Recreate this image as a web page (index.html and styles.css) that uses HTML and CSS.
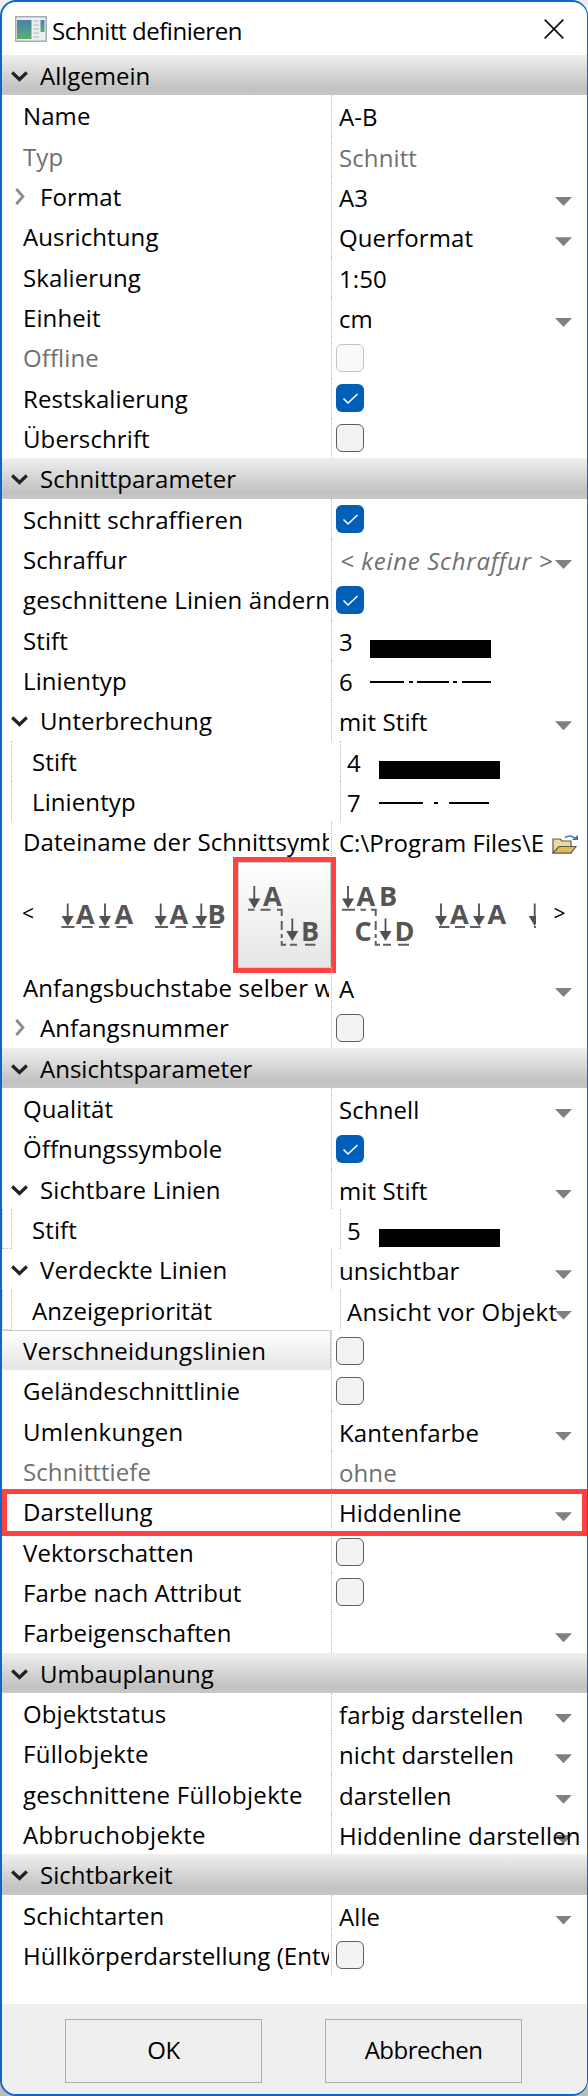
FILE: index.html
```
<!DOCTYPE html>
<html lang="de">
<head>
  <meta charset="UTF-8">
  <title>Schnitt definieren</title>
  <link rel="stylesheet" href="styles.css">
</head>
<body>
  <svg width="0" height="0" class="defs">
    <defs>
      <symbol id="open" viewBox="0 0 17 11"><path d="M1.2 1.500L8.500 8.500L15.800 1.500" fill="none" stroke="#222" stroke-width="3.200"/></symbol>
      <symbol id="closed" viewBox="0 0 10 17"><path d="M1.300 1L8 8.500L1.300 16" fill="none" stroke="#8c8c8c" stroke-width="2.800"/></symbol>
      <symbol id="check" viewBox="0 0 28 28"><path d="M7.500 14.500L12 19L21.500 10" fill="none" stroke="#fff" stroke-width="1.600"/></symbol>
      <linearGradient id="pane" x2="0" y2="1"><stop stop-color="#4681ad"/><stop offset="1" stop-color="#5bb06c"/></linearGradient>
      <g id="down"><path d="M0 0V15" stroke="#505050" stroke-width="1.800"/><path d="M-6 12.500H6L0 22.500Z" fill="#505050"/></g>
    </defs>
  </svg>

  <div class="dialog">
    <div class="titlebar">
      <svg class="app-icon" width="32" height="26" viewBox="0 0 32 26">
        <rect x=".75" y=".75" width="30.5" height="24.5" fill="#eceef0" stroke="#a5adb3" stroke-width="1.5"/>
        <rect x="2" y="4" width="14.5" height="19" fill="url(#pane)"/>
        <path d="M18.500 5H24M18.500 9H24M18.500 13H24M18.500 17H24M18.500 21H24" stroke="#c3c8cb" stroke-width="1.500"/>
        <rect x="25.500" y="4" width="4" height="12" fill="url(#pane)"/>
      </svg>
      <span class="title">Schnitt definieren</span>
      <svg class="close" width="20" height="20" viewBox="0 0 20 20"><path d="M.7.7L19.300 19.300M19.300.7L.7 19.300" stroke="#111" stroke-width="1.700"/></svg>
    </div>

    <div class="group"><svg class="open"><use href="#open"/></svg>Allgemein</div>
    <div class="row"><div class="label">Name</div><div class="value">A-B</div></div>
    <div class="row off"><div class="label">Typ</div><div class="value">Schnitt</div></div>
    <div class="row"><div class="label tree"><svg class="closed"><use href="#closed"/></svg>Format</div><div class="value select">A3</div></div>
    <div class="row"><div class="label">Ausrichtung</div><div class="value select">Querformat</div></div>
    <div class="row"><div class="label">Skalierung</div><div class="value">1:50</div></div>
    <div class="row"><div class="label">Einheit</div><div class="value select">cm</div></div>
    <div class="row off"><div class="label">Offline</div><div class="value"><span class="box"></span></div></div>
    <div class="row"><div class="label">Restskalierung</div><div class="value"><svg class="box on"><use href="#check"/></svg></div></div>
    <div class="row"><div class="label">Überschrift</div><div class="value"><span class="box"></span></div></div>

    <div class="group"><svg class="open"><use href="#open"/></svg>Schnittparameter</div>
    <div class="row"><div class="label">Schnitt schraffieren</div><div class="value"><svg class="box on"><use href="#check"/></svg></div></div>
    <div class="row"><div class="label">Schraffur</div><div class="value select none">&lt; keine Schraffur &gt;</div></div>
    <div class="row"><div class="label">geschnittene Linien ändern</div><div class="value"><svg class="box on"><use href="#check"/></svg></div></div>
    <div class="row"><div class="label">Stift</div><div class="value"><span class="num">3</span><span class="pen"></span></div></div>
    <div class="row"><div class="label">Linientyp</div><div class="value"><span class="num">6</span><svg class="line" width="121" height="2"><path d="M0 1H34M39 1H43M47 1H79M83 1H87M92 1H121" stroke="#000" stroke-width="2"/></svg></div></div>
    <div class="row"><div class="label tree"><svg class="open"><use href="#open"/></svg>Unterbrechung</div><div class="value select">mit Stift</div></div>
    <div class="row sub"><div class="label">Stift</div><div class="value"><span class="num">4</span><span class="pen"></span></div></div>
    <div class="row sub"><div class="label">Linientyp</div><div class="value"><span class="num">7</span><svg class="line" width="121" height="2"><path d="M0 1H44M55 1H59M70 1H110" stroke="#000" stroke-width="2"/></svg></div></div>
    <div class="row"><div class="label">Dateiname der Schnittsymbole</div><div class="value file">C:\Program Files\E
      <svg class="folder" width="27" height="20" viewBox="0 0 27 20">
        <path d="M1 18V4H8L10 6H19V18Z" fill="#ecd9a0" stroke="#5f5646" stroke-width="1.200"/>
        <path d="M1 18L7 11.500H24L19 18Z" fill="#e0bb5c" stroke="#5f5646" stroke-width="1.200"/>
        <path d="M13 2.500Q19-1 23 3.500" fill="none" stroke="#3070c8" stroke-width="1.600"/><path d="M20 5H26V0Z" fill="#3070c8"/>
      </svg></div></div>

    <div class="symbols">
      <span class="step">&lt;</span>
      <div class="picked"></div>
      <svg class="strip" width="480" height="105" viewBox="56 862 480 105">
        <g class="marks">
          <use href="#down" x="67.700" y="903.500"/><use href="#down" x="105" y="903.500"/>
          <path d="M61.500 927H74.500M82 927H92.500M99 927H109.500M116.500 927H126.500"/>
          <text x="76" y="923.500">A</text><text x="114.500" y="923.500">A</text>

          <use href="#down" x="160.700" y="903.500"/><use href="#down" x="201.300" y="903.500"/>
          <path d="M155 927H168M175.500 927H186M192.500 927H205.500M210 927H220.500"/>
          <text x="169.500" y="923.500">A</text><text x="207.500" y="923.500">B</text>

          <use href="#down" x="254.300" y="886"/><use href="#down" x="292.300" y="918.500"/>
          <path d="M248 909.700H254.500M260.500 909.700H270.500M277 909.700H281.700V916M281.700 921V930M281.700 934V938M281.700 941V944.700H286M290 944.700H297M305 944.700H315.500"/>
          <text x="263" y="905.700">A</text><text x="301" y="940.500">B</text>

          <use href="#down" x="348" y="886"/><use href="#down" x="385.500" y="918.500"/>
          <path d="M342 909.700H355M360.500 909.700H366M371 909.700H375.700V916M375.700 921V930M375.700 934V938M375.700 941V944.700H380M383 944.700H391M398 944.700H409"/>
          <text x="356.500" y="905.700">A</text><text x="379" y="905.700">B</text><text x="354.500" y="940.500">C</text><text x="394.500" y="940.500">D</text>

          <use href="#down" x="441" y="903.500"/><use href="#down" x="479" y="903.500"/>
          <path d="M439 927H449.500M455 927H465M470 927H480.500"/>
          <text x="450" y="923.500">A</text><text x="487.500" y="923.500">A</text>

          <use href="#down" x="534.700" y="903.500"/>
          <path d="M534 927H536"/>
        </g>
      </svg>
      <span class="step">&gt;</span>
    </div>

    <div class="row"><div class="label">Anfangsbuchstabe selber wählen</div><div class="value select">A</div></div>
    <div class="row"><div class="label tree"><svg class="closed"><use href="#closed"/></svg>Anfangsnummer</div><div class="value"><span class="box"></span></div></div>

    <div class="group"><svg class="open"><use href="#open"/></svg>Ansichtsparameter</div>
    <div class="row"><div class="label">Qualität</div><div class="value select">Schnell</div></div>
    <div class="row"><div class="label">Öffnungssymbole</div><div class="value"><svg class="box on"><use href="#check"/></svg></div></div>
    <div class="row"><div class="label tree"><svg class="open"><use href="#open"/></svg>Sichtbare Linien</div><div class="value select">mit Stift</div></div>
    <div class="row sub inner"><div class="label">Stift</div><div class="value"><span class="num">5</span><span class="pen"></span></div></div>
    <div class="row"><div class="label tree"><svg class="open"><use href="#open"/></svg>Verdeckte Linien</div><div class="value select">unsichtbar</div></div>
    <div class="row sub inner"><div class="label">Anzeigepriorität</div><div class="value select wide">Ansicht vor Objekt</div></div>
    <div class="row hover"><div class="label">Verschneidungslinien</div><div class="value"><span class="box"></span></div></div>
    <div class="row"><div class="label">Geländeschnittlinie</div><div class="value"><span class="box"></span></div></div>
    <div class="row"><div class="label wide">Umlenkungen</div><div class="value select">Kantenfarbe</div></div>
    <div class="row off"><div class="label">Schnitttiefe</div><div class="value">ohne</div></div>
    <div class="row marked"><div class="label">Darstellung</div><div class="value select">Hiddenline</div></div>
    <div class="row"><div class="label">Vektorschatten</div><div class="value"><span class="box"></span></div></div>
    <div class="row"><div class="label">Farbe nach Attribut</div><div class="value"><span class="box"></span></div></div>
    <div class="row"><div class="label">Farbeigenschaften</div><div class="value select"></div></div>

    <div class="group"><svg class="open"><use href="#open"/></svg>Umbauplanung</div>
    <div class="row"><div class="label">Objektstatus</div><div class="value select">farbig darstellen</div></div>
    <div class="row"><div class="label wide">Füllobjekte</div><div class="value select">nicht darstellen</div></div>
    <div class="row"><div class="label wide">geschnittene Füllobjekte</div><div class="value select">darstellen</div></div>
    <div class="row"><div class="label wide">Abbruchobjekte</div><div class="value select">Hiddenline darstellen</div></div>

    <div class="group"><svg class="open"><use href="#open"/></svg>Sichtbarkeit</div>
    <div class="row"><div class="label">Schichtarten</div><div class="value select">Alle</div></div>
    <div class="row"><div class="label">Hüllkörperdarstellung (Entwurf)</div><div class="value"><span class="box"></span></div></div>

    <div class="footer">
      <button>OK</button>
      <button>Abbrechen</button>
    </div>
  </div>
</body>
</html>
```
FILE: styles.css
```
body {
  margin: 0;
  background: linear-gradient(#eee, #bbb);
  font: 24px/41px "Open Sans", sans-serif;
  letter-spacing: .1px;
  color: #000;
}
svg {
  display: block;
  flex: none;
}
.defs {
  position: absolute;
}
.dialog {
  box-sizing: border-box;
  height: 2096px;
  display: flex;
  flex-direction: column;
  border: 2px solid #0f65c8;
  border-right-width: 1px;
  border-radius: 16px;
  background: #fff;
  overflow: hidden;
}
.titlebar {
  display: flex;
  height: 53px;
  align-items: center;
  padding: 0 23px 0 13px;
}
.title {
  margin: 4px auto 0 5px;
  letter-spacing: -.45px;
}
.close {
  margin-top: 1px;
}
.group {
  display: flex;
  height: 40.33px;
  padding-left: 9px;
  background: linear-gradient(#efefef, #c1c1c1 85%, #c8c8c8);
  letter-spacing: 0;
}
.open {
  width: 17px;
  height: 11px;
  margin: 16px 12px 0 0;
}
.closed {
  width: 10px;
  height: 17px;
  margin: 12px 15px 0 4px;
}

/* property rows */
.row {
  position: relative;
  display: flex;
  height: 40.33px;
  white-space: nowrap;
}
.label {
  box-sizing: border-box;
  width: 327px;
  padding-left: 21px;
  margin-right: 2px;
  overflow: hidden;
}
.label.tree {
  display: flex;
  padding-left: 9px;
}
.value {
  position: relative;
  z-index: 0;
  flex: 1;
  display: flex;
  padding-left: 7px;
  border-left: 1px dotted #bbb;
  line-height: 43px;
}
.wide {
  letter-spacing: .3px;
}
.select::after {
  content: "";
  position: absolute;
  z-index: -1;
  right: 15px;
  top: 21px;
  width: 17px;
  height: 9px;
  background: #808080;
  clip-path: polygon(0 0, 100% 0, 50% 100%);
}
.off {
  color: #707070;
}
.none {
  padding-left: 8px;
  color: #707070;
  font-style: italic;
  letter-spacing: .7px;
}
.file {
  letter-spacing: 0;
}
.num {
  width: 31px;
}
.pen {
  width: 121px;
  height: 18px;
  margin-top: 20px;
  background: #000;
}
.line {
  margin-top: 21px;
}
.folder {
  margin: 14px 8px 0 auto;
}
.sub .label {
  padding-left: 20px;
  margin-left: 9px;
  border-left: 1px dotted #bbb;
}
.sub .value {
  padding-left: 6px;
}
.sub .num {
  width: 32px;
}
.inner::before {
  content: "";
  position: absolute;
  width: 9px;
  height: 39px;
  border: 1px dotted #bbb;
  border-width: 0 0 1px 1px;
}
.hover .label {
  width: 329px;
  margin-right: 0;
  border: 1px solid #ccc;
  border-width: 1px 1px 0 0;
  border-radius: 3px;
  background: linear-gradient(#fff, #e5e5e5);
  line-height: 40px;
  letter-spacing: .2px;
}
.marked::after {
  content: "";
  position: absolute;
  z-index: 1;
  top: -2px;
  left: 0;
  right: 0;
  height: 37px;
  border: 5px solid #ff4242;
}

.box {
  box-sizing: border-box;
  width: 28px;
  height: 28px;
  margin: 6.5px 0 0 -3px;
  border: 1.500px solid #5e5e5e;
  border-radius: 6px;
  background: #f3f3f3;
}
.off .box {
  border-color: #c4c4c4;
  background: #fafafa;
}
.sub .box {
  margin-left: -2px;
}
.box.on {
  border: 0;
  background: #005fb8;
}

/* section symbols */
.symbols {
  position: relative;
  display: flex;
  height: 105.500px;
}
.step {
  width: 34px;
  padding-left: 20px;
  font-size: 21px;
  line-height: 103px;
}
.step:last-child {
  padding-left: 18px;
}
.picked {
  position: absolute;
  top: -5px;
  left: 231px;
  box-sizing: border-box;
  width: 103px;
  height: 116px;
  border: 5px solid #ff4242;
  background: linear-gradient(#fff, #e5e5e5);
  box-shadow: inset 0 0 0 1px #ccc;
}
.strip {
  position: relative;
}
.marks {
  font-size: 27px;
  font-weight: bold;
  letter-spacing: 0;
}
.marks path {
  fill: none;
  stroke: #606060;
  stroke-width: 2;
}
.marks text {
  fill: #555;
}

.footer {
  display: flex;
  gap: 63px;
  height: 90px;
  box-sizing: border-box;
  margin-top: auto;
  padding: 15px 63px 0;
  background: #efefef;
}
.footer button {
  width: 197px;
  height: 64px;
  padding: 0 0 3px;
  border: 1px solid #adadad;
  background: #efefef;
  font: inherit;
  letter-spacing: -.5px;
}
```
